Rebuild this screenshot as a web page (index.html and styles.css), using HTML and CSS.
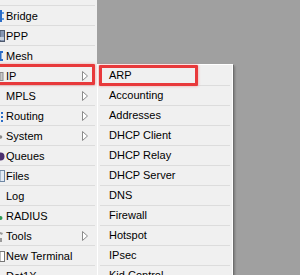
FILE: index.html
```html
<!DOCTYPE html>
<html>
<head>
	<meta charset="UTF-8">
	<title>WinBox menu</title>
	<link rel="stylesheet" href="styles.css">
</head>
<body>
	<div class="menu">
		<div class="row"><span class="ico"></span></div>
		<div class="row">
			<svg class="ico" width="6" height="16"><rect x="0" y="2" width="2" height="12" fill="#2a6cc7"/><rect x="2" y="4" width="2" height="2" fill="#5d9be0"/><rect x="2" y="10" width="2" height="2" fill="#5d9be0"/></svg>
			<span class="label">Bridge</span>
		</div>
		<div class="row">
			<svg class="ico" width="6" height="16"><rect x="0" y="2.5" width="4.5" height="11" fill="#8797b3" stroke="#4e5a6e"/><rect x="0" y="9" width="4" height="3" fill="#c9d2de"/></svg>
			<span class="label">PPP</span>
		</div>
		<div class="row">
			<svg class="ico" width="6" height="16"><path d="M0 3h3v2H1.5v6H3v2H0z" fill="#2a6cc7"/></svg>
			<span class="label">Mesh</span>
		</div>
		<div class="row">
			<svg class="ico" width="6" height="16"><rect x="0" y="4.5" width="3" height="8" fill="#c8c8c8" stroke="#8c8c8c"/></svg>
			<span class="label">IP</span>
			<svg class="arrow" width="6" height="10"><polygon points="0.5,0.5 5.5,5 0.5,9.5" fill="#fff" stroke="#8a8a8a"/></svg>
		</div>
		<div class="row">
			<span class="ico"></span>
			<span class="label">MPLS</span>
			<svg class="arrow" width="6" height="10"><polygon points="0.5,0.5 5.5,5 0.5,9.5" fill="#fff" stroke="#8a8a8a"/></svg>
		</div>
		<div class="row">
			<svg class="ico" width="6" height="16"><rect x="1" y="4" width="2" height="2" fill="#2a6cc7"/><rect x="1" y="8" width="2" height="2" fill="#2a6cc7"/><rect x="1" y="12" width="2" height="2" fill="#2a6cc7"/></svg>
			<span class="label">Routing</span>
			<svg class="arrow" width="6" height="10"><polygon points="0.5,0.5 5.5,5 0.5,9.5" fill="#fff" stroke="#8a8a8a"/></svg>
		</div>
		<div class="row">
			<svg class="ico" width="6" height="16"><circle cx="0.5" cy="9" r="1.8" fill="#8a8a8a"/></svg>
			<span class="label">System</span>
			<svg class="arrow" width="6" height="10"><polygon points="0.5,0.5 5.5,5 0.5,9.5" fill="#fff" stroke="#8a8a8a"/></svg>
		</div>
		<div class="row">
			<svg class="ico" width="6" height="16"><circle cx="0.5" cy="8.5" r="4" fill="#4b2f6e"/></svg>
			<span class="label">Queues</span>
		</div>
		<div class="row">
			<svg class="ico" width="6" height="16"><rect x="0" y="2.5" width="4.5" height="11" fill="#e3ebf5" stroke="#6f87a3"/></svg>
			<span class="label">Files</span>
		</div>
		<div class="row"><span class="ico"></span><span class="label">Log</span></div>
		<div class="row">
			<svg class="ico" width="6" height="16"><circle cx="0.5" cy="10" r="2" fill="#2f9a55"/></svg>
			<span class="label">RADIUS</span>
		</div>
		<div class="row">
			<svg class="ico" width="6" height="16"><path d="M0 4l3 1-1 2-2-1zM0 10h2v4H0z" fill="#9a9a9a"/></svg>
			<span class="label">Tools</span>
			<svg class="arrow" width="6" height="10"><polygon points="0.5,0.5 5.5,5 0.5,9.5" fill="#fff" stroke="#8a8a8a"/></svg>
		</div>
		<div class="row">
			<svg class="ico" width="6" height="16"><rect x="0" y="3.5" width="4.5" height="10" fill="#fff" stroke="#777"/></svg>
			<span class="label">New Terminal</span>
		</div>
		<div class="row"><span class="ico"></span><span class="label">Dot1X</span></div>
	</div>

	<div class="mark mark-ip"></div>

	<div class="sub">
		<div class="item">ARP</div>
		<div class="item">Accounting</div>
		<div class="item">Addresses</div>
		<div class="item">DHCP Client</div>
		<div class="item">DHCP Relay</div>
		<div class="item">DHCP Server</div>
		<div class="item">DNS</div>
		<div class="item">Firewall</div>
		<div class="item">Hotspot</div>
		<div class="item">IPsec</div>
		<div class="item">Kid Control</div>
	</div>

	<div class="mark mark-arp"></div>
</body>
</html>
```

FILE: styles.css
```css
body{
	margin: 0;
	background: #a0a0a0;
	font-family: 'Liberation Sans', Arial, sans-serif;
	font-size: 11px;
	color: #000;
	overflow: hidden;
}
.menu{
	width: 97px;
	height: 300px;
	margin-top: -14px;
	background: #f0f0f0;
}
.row{
	display: flex;
	align-items: center;
	height: 19px;
	margin-right: 2px;
	border-bottom: 1px solid #dcdcdc;
}
.ico{
	display: block;
	flex: none;
	width: 6px;
	height: 16px;
}
.label{
	flex: 1;
	white-space: nowrap;
}
.arrow{
	display: block;
	margin-right: 7px;
}
.sub{
	position: absolute;
	left: 97px;
	top: 64px;
	width: 136px;
	height: 240px;
	box-sizing: border-box;
	padding: 1px 2px 0;
	background: #f0f0f0;
	border: 1px solid #fff;
	box-shadow: 1px 1px 0 #6e6e6e, 2px 2px 2px rgba(0,0,0,.25);
}
.item{
	height: 19px;
	line-height: 19px;
	padding-left: 9px;
	border-bottom: 1px solid #dcdcdc;
	white-space: nowrap;
}
.mark{
	position: absolute;
	box-sizing: border-box;
	height: 21px;
	border: 3px solid #e8393b;
	border-radius: 1px;
	box-shadow: 0 0 3px rgba(232,57,59,.45);
}
.mark-ip{
	left: -4px;
	top: 64px;
	width: 99px;
}
.mark-arp{
	left: 99px;
	top: 65px;
	width: 99px;
}
```
